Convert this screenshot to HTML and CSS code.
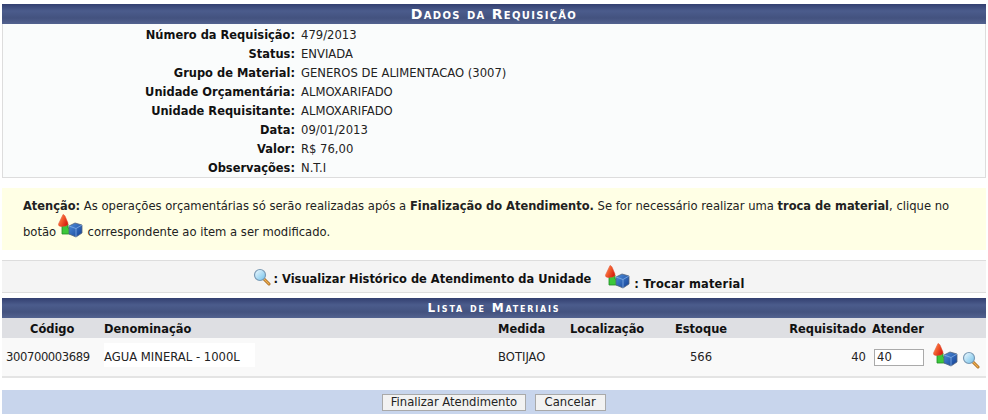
FILE: index.html
```html
<!DOCTYPE html>
<html lang="pt-BR">

<head>
  <meta charset="UTF-8">
  <title>Dados da Requisição</title>
  <link rel="stylesheet" href="styles.css">
</head>

<body>
  <svg class="icon-defs" width="0" height="0">
    <defs>
      <linearGradient id="lensFill" x1="0" y1="0" x2="1" y2="1">
        <stop offset="0" stop-color="#f2fbff" />
        <stop offset="1" stop-color="#6fc0ea" />
      </linearGradient>
      <linearGradient id="coneFill" x1="0" y1="0" x2="1" y2="0.6">
        <stop offset="0" stop-color="#ffd8b0" />
        <stop offset="0.45" stop-color="#f4622f" />
        <stop offset="1" stop-color="#d81e10" />
      </linearGradient>
      <linearGradient id="cubeFill" x1="0" y1="0" x2="1" y2="1">
        <stop offset="0" stop-color="#4f8fdc" />
        <stop offset="1" stop-color="#123f94" />
      </linearGradient>
      <symbol id="lupa" viewBox="0 0 18 18">
        <path d="M11 11 L16 16" stroke="#a86c24" stroke-width="3" stroke-linecap="round" />
        <path d="M11 11 L16 16" stroke="#f0b050" stroke-width="1.2" stroke-linecap="round" />
        <circle cx="7" cy="7" r="5.500" fill="url(#lensFill)" stroke="#7a9ab5" stroke-width="1.2" />
      </symbol>
      <symbol id="troca" viewBox="0 0 25 24">
        <path d="M4 10 L10 10 L10 14 L13 14 L13 20 L4 20 Z" fill="#3cc83a" stroke="#1f8a26" stroke-width="0.8" />
        <path d="M5 0.500 Q6 0.500 7 2 L10 9 Q10.500 11 8 12 L3 12.500 Q0 12 0.500 10 Z" fill="url(#coneFill)" stroke="#e0492e" stroke-width="0.5" />
        <path d="M11 12 L17 9 L24 11 L24 19 L18 23 L11 20 Z" fill="url(#cubeFill)" stroke="#55657c" stroke-width="0.8" stroke-linejoin="round" />
        <path d="M11 12 L18 14.500 L24 11 M18 14.500 L18 23" fill="none" stroke="#8db8ec" stroke-width="0.7" />
      </symbol>
    </defs>
  </svg>

  <div class="page">
    <h3 class="caixa-titulo">Dados da Requisição</h3>
    <div class="dados">
      <div class="dado"><span class="rotulo">Número da Requisição:</span><span>479/2013</span></div>
      <div class="dado"><span class="rotulo">Status:</span><span>ENVIADA</span></div>
      <div class="dado"><span class="rotulo">Grupo de Material:</span><span>GENEROS DE ALIMENTACAO (3007)</span></div>
      <div class="dado"><span class="rotulo">Unidade Orçamentária:</span><span>ALMOXARIFADO</span></div>
      <div class="dado"><span class="rotulo">Unidade Requisitante:</span><span>ALMOXARIFADO</span></div>
      <div class="dado"><span class="rotulo">Data:</span><span>09/01/2013</span></div>
      <div class="dado"><span class="rotulo">Valor:</span><span>R$ 76,00</span></div>
      <div class="dado"><span class="rotulo">Observações:</span><span>N.T.I</span></div>
    </div>

    <div class="aviso">
      <p class="aviso-linha"><b>Atenção:</b> As operações orçamentárias só serão realizadas após a <b>Finalização do Atendimento.</b> Se for necessário realizar uma <b>troca de material</b>, clique no</p>
      <p class="aviso-linha aviso-icone">botão <svg class="ico-troca"><use href="#troca" /></svg> correspondente ao item a ser modificado.</p>
    </div>

    <div class="legenda">
      <svg class="ico-lupa"><use href="#lupa" /></svg>
      <b class="legenda-historico">: Visualizar Histórico de Atendimento da Unidade</b>
      <svg class="ico-troca legenda-troca"><use href="#troca" /></svg>
      <b class="legenda-texto">: Trocar material</b>
    </div>

    <h3 class="caixa-titulo lista-titulo">Lista de Materiais</h3>
    <table class="materiais">
      <thead>
        <tr>
          <th class="col-codigo">Código</th>
          <th class="col-nome">Denominação</th>
          <th class="col-medida">Medida</th>
          <th class="col-local">Localização</th>
          <th class="col-estoque">Estoque</th>
          <th class="col-req">Requisitado</th>
          <th class="col-atender">Atender</th>
          <th></th>
        </tr>
      </thead>
      <tbody>
        <tr>
          <td class="col-codigo-valor">300700003689</td>
          <td class="col-nome"><span class="nome-fundo">AGUA MINERAL - 1000L</span></td>
          <td class="col-medida">BOTIJAO</td>
          <td></td>
          <td class="col-estoque">566</td>
          <td class="col-req">40</td>
          <td class="col-atender"><input class="campo" type="text" value="40"></td>
          <td>
            <div class="acoes"><svg class="ico-troca"><use href="#troca" /></svg><svg class="ico-lupa"><use href="#lupa" /></svg></div>
          </td>
        </tr>
      </tbody>
    </table>

    <div class="rodape">
      <button class="botao botao-finalizar" type="button">Finalizar Atendimento</button>
      <button class="botao" type="button">Cancelar</button>
    </div>
  </div>
</body>

</html>
```

FILE: styles.css
```css
body {
  margin: 0;
  background: #fff;
  color: #222;
  font-family: "DejaVu Sans", Verdana, sans-serif;
  font-size: 11.6px;
}

b,
th,
.rotulo {
  font-size: 11.45px;
}

.icon-defs {
  position: absolute;
}

.page {
  width: 984px;
  margin: 0 2px;
  padding-top: 4px;
}

.caixa-titulo {
  margin: 0;
  height: 20px;
  line-height: 21px;
  text-align: center;
  color: #fff;
  font-size: 14px;
  font-weight: bold;
  font-variant: small-caps;
  letter-spacing: 1.3px;
  background: linear-gradient(#333f70, #4b5c8c 35%, #43527f 70%, #52628f);
}

.dados {
  height: 154px;
  box-sizing: border-box;
  padding-top: 2px;
  background: #fafcfc;
  border: 1px solid #ddd;
  border-top: 0;
}

.dado {
  display: flex;
  height: 19px;
  line-height: 19px;
  gap: 6px;
}

.rotulo {
  width: 292px;
  text-align: right;
  font-weight: bold;
  color: #111;
}

.aviso {
  height: 62px;
  box-sizing: border-box;
  margin-top: 10px;
  padding: 8px 21px 0;
  background: #ffffe5;
}

.aviso-linha {
  margin: 0;
  line-height: 20px;
}

.aviso-icone {
  margin-top: 6px;
}

.aviso-icone .ico-troca {
  vertical-align: -2px;
  margin: -12px 1px 0 -2px;
}

.legenda {
  height: 33px;
  box-sizing: border-box;
  margin-top: 10px;
  display: flex;
  justify-content: center;
  align-items: flex-start;
  padding-left: 10px;
  background: #f4f4f4;
  border-top: 1px solid #ddd;
  border-bottom: 1px solid #ddd;
  color: #111;
}

.legenda .ico-lupa {
  margin-top: 7px;
}

.legenda-historico {
  margin: 11px 0 0 2px;
}

.legenda-troca {
  margin: 4px 4px 0 14px;
}

.legenda-texto {
  margin-top: 16px;
  letter-spacing: 0.2px;
}

.lista-titulo {
  margin-top: 5px;
  font-size: 12px;
  letter-spacing: 1.8px;
}

.materiais {
  width: 984px;
  table-layout: fixed;
  border-collapse: collapse;
  border-bottom: 2px solid #e4e4e4;
}

.materiais th {
  height: 20px;
  padding: 1px 0 0;
  box-sizing: border-box;
  background: #dedfe3;
  color: #111;
  text-align: left;
}

.materiais td {
  height: 38px;
  padding: 0;
  background: #f9f9f9;
}

.materiais th.col-codigo {
  width: 102px;
  padding-left: 28px;
}

.materiais .col-codigo-valor {
  padding-left: 4px;
  letter-spacing: -0.4px;
}

.col-nome {
  width: 394px;
}

.nome-fundo {
  display: block;
  width: 151px;
  height: 24px;
  line-height: 28px;
  margin-bottom: 4px;
  background: #fff;
}

.col-medida {
  width: 72px;
}

.col-local {
  width: 105px;
}

.materiais .col-estoque {
  width: 52px;
  text-align: center;
}

.materiais .col-req {
  width: 139px;
  text-align: right;
}

.materiais .col-atender {
  width: 60px;
  box-sizing: border-box;
  padding-left: 6px;
}

.campo {
  display: block;
  width: 50px;
  height: 17px;
  box-sizing: border-box;
  padding: 0 2px;
  margin-left: 2px;
  border: 1px solid #aaa;
  background: #fff;
  color: #222;
  font-family: inherit;
  font-size: 11.6px;
}

.acoes {
  display: flex;
  align-items: flex-end;
  padding: 0 0 4px 7px;
}

.ico-troca {
  width: 25px;
  height: 24px;
}

.acoes .ico-lupa {
  margin: 0 0 -2px 4px;
}

.ico-lupa {
  width: 18px;
  height: 18px;
}

.rodape {
  height: 24px;
  margin-top: 12px;
  display: flex;
  justify-content: center;
  align-items: center;
  gap: 9px;
  background: #c8d5ec;
}

.botao {
  height: 17px;
  padding: 0 9px;
  border: 1px solid #a9a9a9;
  background: #f2f2f2;
  color: #222;
  font-family: inherit;
  font-size: 11.6px;
  line-height: 15px;
}

.botao-finalizar {
  padding: 0 7.5px;
}
```
